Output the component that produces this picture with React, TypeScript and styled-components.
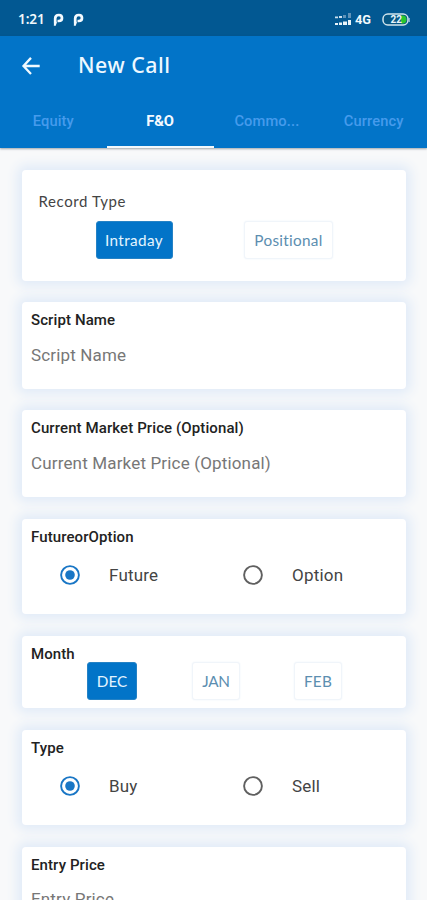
import React, { useState } from "react";
import styled, { createGlobalStyle } from "styled-components";

const GlobalStyle = createGlobalStyle`
  * { box-sizing: border-box; }
  html, body { margin: 0; padding: 0; overflow: hidden; }
  body { background: #f8f9fa; font-family: Roboto, "Liberation Sans", sans-serif; }
  button { font: inherit; border: 0; margin: 0; padding: 0; background: none; cursor: pointer; }
`;

const BLUE = "#0274c8";

const Screen = styled.main`
  width: 427px;
  height: 900px;
  overflow: hidden;
  display: flex;
  flex-direction: column;
  background: #f8f9fa;
`;

const StatusBar = styled.div`
  flex: none;
  height: 36px;
  padding: 3px 17px 0 18px;
  display: flex;
  align-items: center;
  background: #025892;
  color: #f1f8fc;
`;

const Clock = styled.span`
  width: 35px;
  font: 600 13.6px/16px "Noto Sans", sans-serif;
  letter-spacing: -0.1px;
  padding-bottom: 1px;
`;

const StatusIcons = styled.div`
  display: flex;
  gap: 9px;
  flex: 1;
`;

const Network = styled.span`
  margin-left: 3px;
  width: 27px;
  font: 700 12.8px/16px Roboto, sans-serif;
`;

const Header = styled.header`
  flex: none;
  height: 112px;
  display: flex;
  flex-direction: column;
  background: ${BLUE};
  box-shadow: 0 1px 2px rgba(70, 80, 90, 0.5);
  z-index: 1;
`;

const TitleRow = styled.div`
  height: 59px;
  display: flex;
  align-items: center;
  padding-left: 21px;
`;

const BackButton = styled.button`
  width: 57px;
  height: 20px;
  text-align: left;
`;

const Title = styled.h1`
  margin: 0;
  padding-bottom: 1px;
  color: #eef8ff;
  font: 500 21.3px/28px "Noto Sans", sans-serif;
  letter-spacing: 0.55px;
`;

const Tabs = styled.nav`
  height: 53px;
  display: grid;
  grid-template-columns: repeat(4, 1fr);
`;

const Tab = styled.button<{ $active: boolean }>`
  && {
    padding: 1px 0 0;
    border-bottom: 2px solid ${(p) => (p.$active ? "#f2f8fc" : "transparent")};
    color: ${(p) => (p.$active ? "#f4faff" : "#469bec")};
    font: ${(p) => (p.$active ? 700 : 500)} 14.7px/20px Roboto, sans-serif;
    letter-spacing: ${(p) => (p.$active ? "-0.1px" : "0.1px")};
  }
`;

const Form = styled.div`
  flex: 1;
  min-height: 0;
  padding: 22px 21px 0 22px;
  display: flex;
  flex-direction: column;
  gap: 21.7px;
`;

const Card = styled.section<{ $height: number }>`
  flex: none;
  height: ${(p) => p.$height}px;
  padding: 9px 9px 0;
  border-radius: 4px;
  background: #fff;
  box-shadow: 0 0 12px 5px #e1ebf8;
`;

const RecordCard = styled(Card)`
  padding: 21px 16.5px 0;
`;

const RecordLabel = styled.div`
  color: #444;
  font: 400 15px/20px Lato, sans-serif;
  letter-spacing: 0.6px;
`;

const Label = styled.label`
  display: block;
  color: #222;
  font: 500 15px/18px Roboto, sans-serif;
  letter-spacing: 0.1px;
`;

const Input = styled.input`
  display: block;
  width: 100%;
  height: 24px;
  margin-top: 13.5px;
  padding: 0;
  border: 0;
  outline: 0;
  background: none;
  font: 400 17px/24px Roboto, sans-serif;
  letter-spacing: 0.16px;
  &::placeholder { color: #777; opacity: 1; }
`;

const RadioRow = styled.div`
  display: grid;
  grid-template-columns: 183px 1fr;
  margin: 17.5px 0 0 29px;
`;

const RadioOption = styled.button`
  && {
    display: flex;
    align-items: center;
    gap: 29px;
    height: 24px;
    color: #444;
    font: 400 17px/24px Roboto, sans-serif;
    letter-spacing: 0.2px;
  }
`;

const ChipRow = styled.div<{ $gaps: string; $offset: string }>`
  display: grid;
  grid-template-columns: ${(p) => p.$gaps};
  margin: ${(p) => p.$offset};
`;

const Chip = styled.button<{ $active: boolean; $width: number; $spacing: number }>`
  && {
    width: ${(p) => p.$width}px;
    height: 38px;
    border: 1px solid ${(p) => (p.$active ? "#2582c5" : "#f0f5fa")};
    border-radius: 3px;
    background: ${(p) => (p.$active ? BLUE : "#fff")};
    box-shadow: ${(p) => (p.$active ? "none" : "0 0 2px #edf4fa")};
    color: ${(p) => (p.$active ? "#e4f4ff" : "#5c8eb0")};
    font: 400 15.3px/20px Lato, sans-serif;
    letter-spacing: ${(p) => p.$spacing}px;
    white-space: nowrap;
  }
`;

const PayIcon = () => (
  <svg width="11" height="14" viewBox="0 0 11 14" fill="none">
    <path d="M2.2 10.5V5.4Q2.2 2 5.9 2Q9 2 9 5Q9 8 5.8 8H4.5" stroke="#f4faff" strokeWidth="2.7" />
    <path d="M1 9.4L3.8 8.7L2.8 12.7H.8Z" fill="#f4faff" />
  </svg>
);

const SignalIcon = () => (
  <svg width="17" height="13" viewBox="0 0 17 13">
    <path d="M0 3.5h3v1.7H0zM4 3h3v2H4z" fill="#cce0ee" />
    <path d="M8 2h3v3H8zM13 0h3v5h-3z" fill="#5f93b9" />
    <path d="M0 10h3v2H0zM4 9.5h3V12H4zM8 8.5h4V12H8zM13 7h3v5h-3z" fill="#e8f4fa" />
  </svg>
);

const BatteryIcon = () => (
  <svg width="28" height="14" viewBox="0 0 28 14">
    <rect x="1" y="1" width="25" height="11" rx="4.8" fill="#075785" stroke="#d2e5ed" strokeWidth="1.5" />
    <path d="M19 2.5h2.5Q24.5 3 24.5 6.5T21.5 10.5H19Z" fill="#27c72f" />
    <path d="M27.2 5v4" stroke="#b6d4df" />
    <text x="8.5" y="10" fill="#e7f4fb" fontFamily="Roboto" fontWeight="700" fontSize="10">22</text>
  </svg>
);

const BackIcon = () => (
  <svg width="20" height="20" viewBox="0 0 20 20" fill="none" stroke="#f0f9ff" strokeWidth="2.3">
    <path d="M18.7 10H2.7M10 1.9L2.5 10L10 18" />
  </svg>
);

const RadioIcon = ({ checked }: { checked: boolean }) => (
  <svg width="20" height="20" viewBox="0 0 20 20">
    <circle cx="10" cy="10" r="8.9" fill="none" stroke={checked ? "#1976c5" : "#606060"} strokeWidth="1.9" />
    {checked && <circle cx="10" cy="10" r="4.8" fill="#1976c5" />}
  </svg>
);

function TextCard({ name, height }: { name: string; height: number }) {
  return (
    <Card $height={height}>
      <Label>{name}</Label>
      <Input placeholder={name} aria-label={name} />
    </Card>
  );
}

function RadioCard({ name, options }: { name: string; options: string[] }) {
  const [selected, setSelected] = useState(options[0]);
  return (
    <Card $height={95.5}>
      <Label>{name}</Label>
      <RadioRow role="radiogroup" aria-label={name}>
        {options.map((option) => (
          <RadioOption key={option} role="radio" aria-checked={selected === option} onClick={() => setSelected(option)}>
            <RadioIcon checked={selected === option} />
            {option}
          </RadioOption>
        ))}
      </RadioRow>
    </Card>
  );
}

interface ChipItem {
  label: string;
  width: number;
  spacing: number;
}

function ChipGroup({ items, gaps, offset }: { items: ChipItem[]; gaps: string; offset: string }) {
  const [selected, setSelected] = useState(items[0].label);
  return (
    <ChipRow $gaps={gaps} $offset={offset}>
      {items.map(({ label, width, spacing }) => (
        <Chip key={label} $active={selected === label} $width={width} $spacing={spacing} onClick={() => setSelected(label)}>
          {label}
        </Chip>
      ))}
    </ChipRow>
  );
}

const RECORD_TYPES: ChipItem[] = [
  { label: "Intraday", width: 77, spacing: 0.4 },
  { label: "Positional", width: 89, spacing: 0.3 },
];

const MONTHS: ChipItem[] = [
  { label: "DEC", width: 50, spacing: 0 },
  { label: "JAN", width: 48, spacing: -0.3 },
  { label: "FEB", width: 48, spacing: 0.2 },
];

const TABS = ["Equity", "F&O", "Commo...", "Currency"];

export default function App() {
  const [tab, setTab] = useState("F&O");
  return (
    <Screen>
      <GlobalStyle />
      <StatusBar>
        <Clock>1:21</Clock>
        <StatusIcons><PayIcon /><PayIcon /></StatusIcons>
        <SignalIcon />
        <Network>4G</Network>
        <BatteryIcon />
      </StatusBar>
      <Header>
        <TitleRow>
          <BackButton aria-label="Back"><BackIcon /></BackButton>
          <Title>New Call</Title>
        </TitleRow>
        <Tabs>
          {TABS.map((name) => (
            <Tab key={name} $active={tab === name} onClick={() => setTab(name)}>{name}</Tab>
          ))}
        </Tabs>
      </Header>
      <Form>
        <RecordCard $height={110.7}>
          <RecordLabel>Record Type</RecordLabel>
          <ChipGroup items={RECORD_TYPES} gaps="148.5px 89px" offset="10px 0 0 57px" />
        </RecordCard>
        <TextCard name="Script Name" height={86.2} />
        <TextCard name="Current Market Price (Optional)" height={86.9} />
        <RadioCard name="FutureorOption" options={["Future", "Option"]} />
        <Card $height={72}>
          <Label>Month</Label>
          <ChipGroup items={MONTHS} gaps="105px 102px 48px" offset="-1px 0 0 56px" />
        </Card>
        <RadioCard name="Type" options={["Buy", "Sell"]} />
        <TextCard name="Entry Price" height={87} />
      </Form>
    </Screen>
  );
}
